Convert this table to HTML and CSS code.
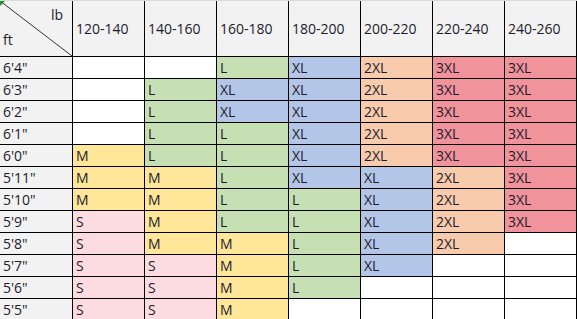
FILE: index.html
```html
<!DOCTYPE html>
<html lang="en">
<head>
  <meta charset="UTF-8" />
  <title>Size chart</title>
  <link rel="stylesheet" href="styles.css">
</head>
<body>
  <div class="sheet" id="sheet">
    <div class="cell corner">
      <svg class="diag" width="73" height="56" viewBox="0 0 73 56">
        <line x1="0" y1="0" x2="72" y2="55" stroke="#333" stroke-width="1" />
        <polygon points="0,0 5,0 0,5" fill="#1e8e3e" />
      </svg>
      <span class="lb">lb</span>
      <span class="ft">ft</span>
    </div>
  </div>

  <script>
    const sheet = document.getElementById('sheet');

    const weights = ["120-140", "140-160", "160-180", "180-200", "200-220", "220-240", "240-260"];

    const rows = [
      ["6'4\"", "", "", "L", "XL", "2XL", "3XL", "3XL"],
      ["6'3\"", "", "L", "XL", "XL", "2XL", "3XL", "3XL"],
      ["6'2\"", "", "L", "XL", "XL", "2XL", "3XL", "3XL"],
      ["6'1\"", "", "L", "L", "XL", "2XL", "3XL", "3XL"],
      ["6'0\"", "M", "L", "L", "XL", "2XL", "3XL", "3XL"],
      ["5'11\"", "M", "M", "L", "XL", "XL", "2XL", "3XL"],
      ["5'10\"", "M", "M", "L", "L", "XL", "2XL", "3XL"],
      ["5'9\"", "S", "M", "L", "L", "XL", "2XL", "3XL"],
      ["5'8\"", "S", "M", "M", "L", "XL", "2XL", ""],
      ["5'7\"", "S", "S", "M", "L", "XL", "", ""],
      ["5'6\"", "S", "S", "M", "L", "", "", ""],
      ["5'5\"", "S", "S", "M", "", "", "", ""]
    ];

    const sizeClass = { "S": "s", "M": "m", "L": "l", "XL": "xl", "2XL": "xxl", "3XL": "xxxl" };

    function addCell(text, cls) {
      const cell = document.createElement('div');
      cell.className = 'cell ' + cls;
      cell.textContent = text;
      sheet.appendChild(cell);
    }

    weights.forEach(w => addCell(w, 'head'));

    rows.forEach(r => {
      addCell(r[0], 'side');
      r.slice(1).forEach(v => addCell(v, v ? sizeClass[v] : 'empty'));
    });
  </script>
</body>
</html>
```

FILE: styles.css
```css
body {
  margin: 0;
  background: #fff;
  font-family: "Open Sans", "Noto Sans", sans-serif;
  font-size: 14px;
  color: #1c1c2c;
}
.sheet {
  display: grid;
  grid-template-columns: 73px repeat(7, 72px);
  grid-template-rows: 56px;
  grid-auto-rows: 22px;
  border-top: 1px solid #dadada;
}
.cell {
  box-sizing: border-box;
  border-right: 1px solid #000;
  border-bottom: 1px solid #000;
  padding-left: 3px;
  display: flex;
  align-items: center;
  white-space: nowrap;
  overflow: hidden;
}
.head, .side, .corner {
  background: #f2f2f2;
}
.corner {
  position: relative;
}
.diag {
  position: absolute;
  left: 0;
  top: 0;
}
.lb {
  position: absolute;
  right: 9px;
  top: 4px;
}
.ft {
  position: absolute;
  left: 3px;
  top: 29px;
}
.empty { background: #fff; }
.s { background: #fcdce0; }
.m { background: #ffe699; }
.l { background: #c6e0b4; }
.xl { background: #b4c6e7; }
.xxl { background: #f8cbad; }
.xxxl { background: #f0939b; }
```
